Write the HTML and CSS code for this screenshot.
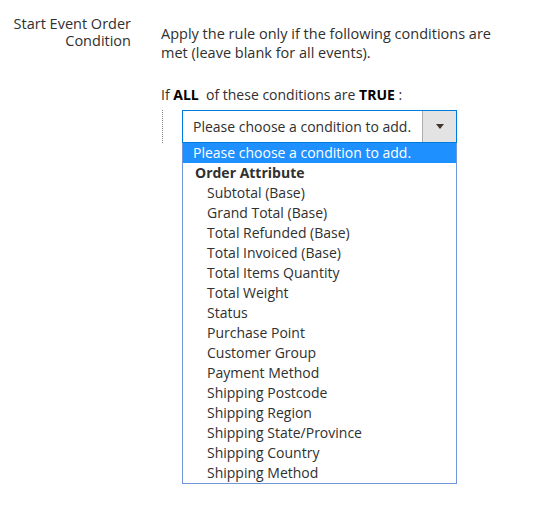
FILE: index.html
```html
<!DOCTYPE html>
<html>
<head>
<meta charset="utf-8">
<link rel="stylesheet" href="styles.css">
</head>
<body>
<div class="field">
  <div class="label">Start Event Order Condition</div>
  <div class="control">
    <p class="note">Apply the rule only if the following conditions are met (leave blank for all events).</p>
    <p class="rule">If <strong>ALL</strong>&nbsp; of these conditions are <strong>TRUE</strong> :</p>
    <div class="tree">
      <div class="select">
        <span class="select-text">Please choose a condition to add.</span>
        <span class="select-arrow"><span class="caret"></span></span>
      </div>
      <ul class="listbox">
        <li class="opt selected">Please choose a condition to add.</li>
        <li class="group">Order Attribute</li>
        <li class="opt sub">Subtotal (Base)</li>
        <li class="opt sub">Grand Total (Base)</li>
        <li class="opt sub">Total Refunded (Base)</li>
        <li class="opt sub">Total Invoiced (Base)</li>
        <li class="opt sub">Total Items Quantity</li>
        <li class="opt sub">Total Weight</li>
        <li class="opt sub">Status</li>
        <li class="opt sub">Purchase Point</li>
        <li class="opt sub">Customer Group</li>
        <li class="opt sub">Payment Method</li>
        <li class="opt sub">Shipping Postcode</li>
        <li class="opt sub">Shipping Region</li>
        <li class="opt sub">Shipping State/Province</li>
        <li class="opt sub">Shipping Country</li>
        <li class="opt sub">Shipping Method</li>
      </ul>
    </div>
  </div>
</div>
</body>
</html>
```
FILE: styles.css
```css
html, body {
  margin: 0;
  padding: 0;
  background: #ffffff;
}
body {
  font-family: "Open Sans", "DejaVu Sans", sans-serif;
  font-size: 14px;
  color: #303030;
  width: 553px;
  height: 516px;
  overflow: hidden;
}
.field {
  display: flex;
  gap: 30px;
  padding-top: 15px;
}
.label {
  width: 131px;
  text-align: right;
  line-height: 17px;
  font-size: 14.5px;
  color: #303030;
}
.control {
  padding-top: 9px;
  width: 345px;
}
.note {
  margin: 0;
  line-height: 19px;
  font-size: 14.5px;
}
.rule {
  margin: 23px 0 0;
  line-height: 19px;
}
.rule strong {
  font-weight: 700;
  color: #000;
}
.tree {
  position: relative;
  margin-top: 6px;
  margin-left: 1px;
  padding-left: 19px;
  border-left: 1px dotted #8a8a8a;
  width: 275px;
}
.select {
  display: flex;
  height: 31px;
  border: 1px solid #007bdb;
  background: #fff;
}
.select-text {
  flex: 1;
  line-height: 31px;
  padding-left: 10px;
  color: #303030;
}
.select-arrow {
  width: 33px;
  background: #e3e3e3;
  border-left: 1px solid #adadad;
  display: flex;
  align-items: center;
  justify-content: center;
}
.caret {
  width: 0;
  height: 0;
  border-left: 4px solid transparent;
  border-right: 4px solid transparent;
  border-top: 5px solid #41362f;
  margin-left: 1px;
}
.listbox {
  position: absolute;
  left: 19px;
  top: 33px;
  width: 273px;
  margin: 0;
  padding: 0;
  list-style: none;
  border: 1px solid #7098d8;
  border-top: none;
  background: #fff;
}
.listbox li {
  height: 20px;
  line-height: 20px;
  white-space: nowrap;
}
.opt {
  padding-left: 10px;
}
.opt.selected {
  background: #1e90ff;
  color: #fff;
}
.group {
  font-weight: 700;
  padding-left: 12px;
}
.opt.sub {
  padding-left: 24px;
}
```
